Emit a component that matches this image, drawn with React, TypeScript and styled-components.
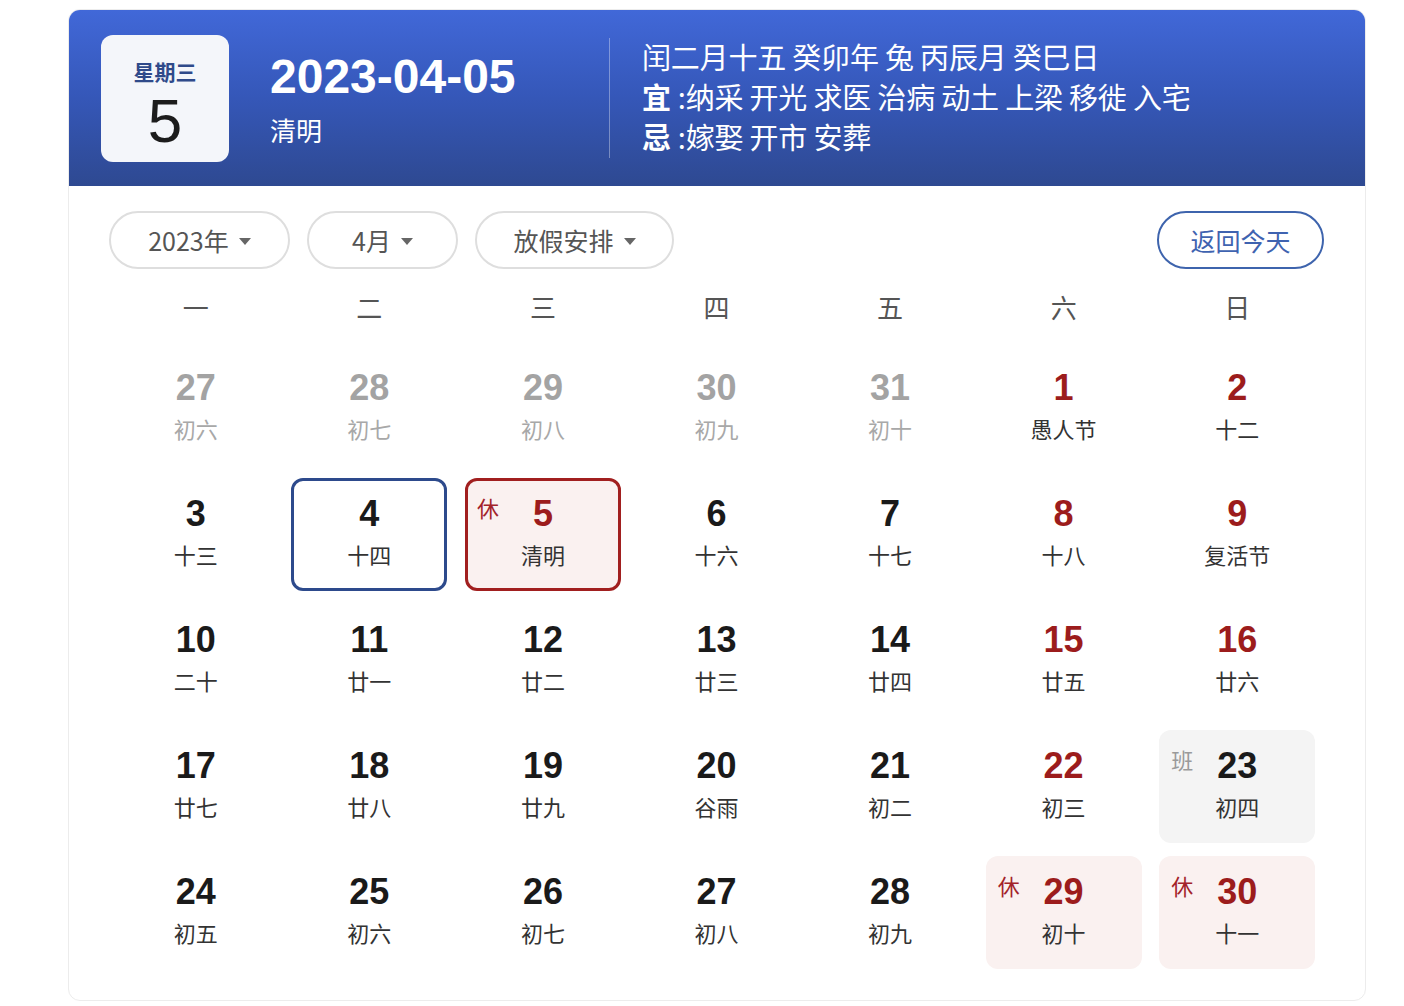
import styled, { createGlobalStyle, css } from 'styled-components'

const GlobalStyle = createGlobalStyle`
    body {
        margin: 0;
        background: #ffffff;
        font-family: "Liberation Sans", "Noto Sans CJK SC", sans-serif;
    }
`

const Card = styled.div`
    width: 1296px;
    margin: 9px 0 0 68px;
    border: 1px solid #ececec;
    border-radius: 12px;
    overflow: hidden;
    background: #fff;
`

const Header = styled.div`
    height: 176px;
    display: flex;
    align-items: center;
    padding-left: 32px;
    background: linear-gradient(180deg, #4168d8 0%, #3557b8 50%, #2e4991 100%);
    color: #fff;
`

const DayBox = styled.div`
    width: 128px;
    height: 127px;
    box-sizing: border-box;
    padding-top: 23px;
    border-radius: 12px;
    background: #f4f6fa;
    display: flex;
    flex-direction: column;
    align-items: center;
`

const WeekName = styled.div`
    font-family: "Noto Sans CJK SC", sans-serif;
    font-size: 21px;
    line-height: 26px;
    font-weight: 700;
    color: #2f4a8a;
`

const BigDay = styled.div`
    font-size: 62px;
    line-height: 64px;
    margin-top: 5px;
    color: #1c1c1c;
`

const DateMain = styled.div`
    width: 339px;
    margin-left: 41px;
    display: flex;
    flex-direction: column;
    gap: 7px;
`

const DateTitle = styled.div`
    font-size: 48px;
    line-height: 56px;
    font-weight: 700;
`

const DateTerm = styled.div`
    font-family: "Noto Sans CJK SC", sans-serif;
    font-size: 26px;
    line-height: 36px;
`

const Divider = styled.div`
    width: 1px;
    height: 120px;
    margin-right: 32px;
    background: rgba(255, 255, 255, 0.35);
`

const Almanac = styled.div`
    font-family: "Noto Sans CJK SC", sans-serif;
    font-size: 29px;
    line-height: 40px;
    letter-spacing: -0.2px;
    padding-bottom: 4px;
`

const Strong = styled.b`
    font-weight: 700;
    margin-right: 7px;
`

const Body = styled.div`
    padding: 25px 41px 31px 40px;
`

const Toolbar = styled.div`
    display: flex;
    align-items: center;
    gap: 17px;
`

const Pill = styled.button<{ $w: number }>`
    width: ${p => p.$w}px;
    height: 58px;
    box-sizing: border-box;
    border: 2px solid #dedede;
    border-radius: 29px;
    background: #fff;
    display: flex;
    align-items: center;
    justify-content: center;
    gap: 10px;
    font-family: "Noto Sans CJK SC", sans-serif;
    font-size: 25px;
    color: #555;
    padding: 0;
    cursor: pointer;
`

const Caret = styled.span`
    width: 0;
    height: 0;
    border-left: 6px solid transparent;
    border-right: 6px solid transparent;
    border-top: 7px solid #666;
    margin-top: 2px;
`

const TodayButton = styled(Pill)`
    margin-left: auto;
    border-color: #3e64ad;
    color: #3f63b0;
`

const WeekRow = styled.div`
    display: grid;
    grid-template-columns: repeat(7, 1fr);
    height: 56px;
    margin-top: 9px;
    align-items: center;
    justify-items: center;
    font-family: "Noto Sans CJK SC", sans-serif;
    font-size: 26px;
    color: #555;
`

const DaysGrid = styled.div`
    display: grid;
    grid-template-columns: repeat(7, 1fr);
    grid-auto-rows: 113px;
    row-gap: 13px;
    margin-top: 18px;
    justify-items: center;
`

type Kind = 'prev' | 'cur'

const Cell = styled.div<{ $today?: boolean; $rest?: boolean; $work?: boolean; $sel?: boolean }>`
    position: relative;
    width: 156px;
    height: 113px;
    box-sizing: border-box;
    border-radius: 12px;
    display: flex;
    flex-direction: column;
    align-items: center;
    justify-content: center;
    gap: 5px;
    padding-bottom: 6px;
    border: 3px solid transparent;
    ${p => p.$rest && css`background: #faf1f0;`}
    ${p => p.$work && css`background: #f4f4f4;`}
    ${p => p.$today && css`border-color: #2d4a8c;`}
    ${p => p.$sel && css`border-color: #a11f1f;`}
`

const Num = styled.div<{ $kind: Kind; $red?: boolean }>`
    font-size: 36px;
    line-height: 40px;
    font-weight: 700;
    color: ${p => (p.$kind === 'prev' ? '#a3a3a3' : p.$red ? '#9c1c1c' : '#1a1a1a')};
`

const Lunar = styled.div<{ $kind: Kind }>`
    font-family: "Noto Sans CJK SC", sans-serif;
    font-size: 22px;
    line-height: 30px;
    color: ${p => (p.$kind === 'prev' ? '#a8a8a8' : '#333')};
`

const Badge = styled.span<{ $work?: boolean }>`
    position: absolute;
    left: 9px;
    top: 11px;
    font-family: "Noto Sans CJK SC", sans-serif;
    font-size: 22px;
    line-height: 30px;
    color: ${p => (p.$work ? '#9a9a9a' : '#a3232a')};
`

type Day = {
    d: number
    l: string
    k?: Kind
    red?: boolean
    badge?: '休' | '班'
    today?: boolean
    sel?: boolean
}

const days: Day[] = [
    { d: 27, l: '初六', k: 'prev' },
    { d: 28, l: '初七', k: 'prev' },
    { d: 29, l: '初八', k: 'prev' },
    { d: 30, l: '初九', k: 'prev' },
    { d: 31, l: '初十', k: 'prev' },
    { d: 1, l: '愚人节', red: true },
    { d: 2, l: '十二', red: true },
    { d: 3, l: '十三' },
    { d: 4, l: '十四', today: true },
    { d: 5, l: '清明', red: true, badge: '休', sel: true },
    { d: 6, l: '十六' },
    { d: 7, l: '十七' },
    { d: 8, l: '十八', red: true },
    { d: 9, l: '复活节', red: true },
    { d: 10, l: '二十' },
    { d: 11, l: '廿一' },
    { d: 12, l: '廿二' },
    { d: 13, l: '廿三' },
    { d: 14, l: '廿四' },
    { d: 15, l: '廿五', red: true },
    { d: 16, l: '廿六', red: true },
    { d: 17, l: '廿七' },
    { d: 18, l: '廿八' },
    { d: 19, l: '廿九' },
    { d: 20, l: '谷雨' },
    { d: 21, l: '初二' },
    { d: 22, l: '初三', red: true },
    { d: 23, l: '初四', badge: '班' },
    { d: 24, l: '初五' },
    { d: 25, l: '初六' },
    { d: 26, l: '初七' },
    { d: 27, l: '初八' },
    { d: 28, l: '初九' },
    { d: 29, l: '初十', red: true, badge: '休' },
    { d: 30, l: '十一', red: true, badge: '休' },
]

const weekNames = ['一', '二', '三', '四', '五', '六', '日']

export default function App() {
    return (
        <>
            <GlobalStyle />
            <Card>
                <Header>
                    <DayBox>
                        <WeekName>星期三</WeekName>
                        <BigDay>5</BigDay>
                    </DayBox>
                    <DateMain>
                        <DateTitle>2023-04-05</DateTitle>
                        <DateTerm>清明</DateTerm>
                    </DateMain>
                    <Divider />
                    <Almanac>
                        <div>闰二月十五 癸卯年 兔 丙辰月 癸巳日</div>
                        <div><Strong>宜</Strong>:纳采 开光 求医 治病 动土 上梁 移徙 入宅</div>
                        <div><Strong>忌</Strong>:嫁娶 开市 安葬</div>
                    </Almanac>
                </Header>
                <Body>
                    <Toolbar>
                        <Pill $w={181}>2023年<Caret /></Pill>
                        <Pill $w={151}>4月<Caret /></Pill>
                        <Pill $w={199}>放假安排<Caret /></Pill>
                        <TodayButton $w={167}>返回今天</TodayButton>
                    </Toolbar>
                    <WeekRow>
                        {weekNames.map(w => <div key={w}>{w}</div>)}
                    </WeekRow>
                    <DaysGrid>
                        {days.map((day, i) => {
                            const kind = day.k ?? 'cur'
                            return (
                                <Cell
                                    key={i}
                                    $today={day.today}
                                    $sel={day.sel}
                                    $rest={day.badge === '休'}
                                    $work={day.badge === '班'}
                                >
                                    {day.badge && <Badge $work={day.badge === '班'}>{day.badge}</Badge>}
                                    <Num $kind={kind} $red={day.red}>{day.d}</Num>
                                    <Lunar $kind={kind}>{day.l}</Lunar>
                                </Cell>
                            )
                        })}
                    </DaysGrid>
                </Body>
            </Card>
        </>
    )
}
